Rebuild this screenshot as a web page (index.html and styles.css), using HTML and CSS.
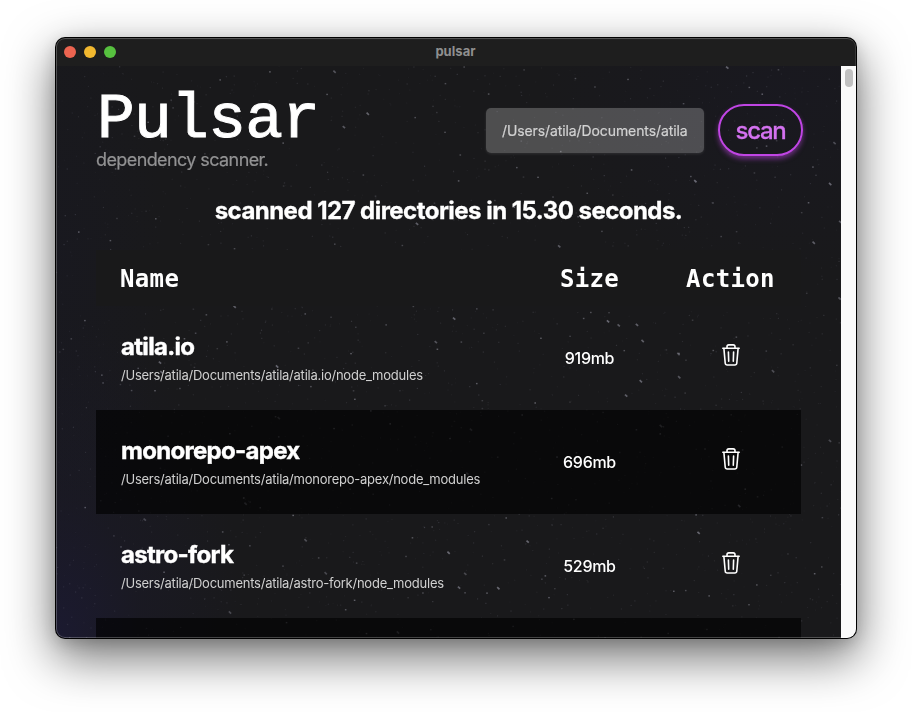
FILE: index.html
```html
<!DOCTYPE html>
<html lang="en">
<head>
<meta charset="utf-8">
<title>pulsar</title>
<link rel="stylesheet" href="styles.css">
</head>
<body>
<svg class="defs" aria-hidden="true">
  <symbol id="trash" viewBox="0 0 20 24">
    <g fill="none" stroke="currentColor" stroke-width="1.6" stroke-linecap="round" stroke-linejoin="round">
      <path d="M1.8 5.3H18.2"/>
      <path d="M6 5V3.7Q6 1.9 7.8 1.9H12.2Q14 1.9 14 3.7V5"/>
      <path d="M2.9 5.5L4.2 20Q4.4 22 6.2 22H13.8Q15.6 22 15.8 20L17.1 5.5"/>
      <path d="M7.4 9L7.7 18.2M12.6 9L12.3 18.2"/>
    </g>
  </symbol>
</svg>
<div class="window">
  <div class="titlebar">
    <div class="lights"><i class="light red"></i><i class="light yellow"></i><i class="light green"></i></div>
    <span class="title">pulsar</span>
  </div>
  <div class="viewport">
    <main class="content">
      <canvas class="stars" id="stars" width="785" height="572"></canvas>
      <header class="header">
        <div class="brand">
          <h1 class="logo">Pulsar</h1>
          <p class="tagline">dependency scanner.</p>
        </div>
        <div class="controls">
          <div class="path-field">/Users/atila/Documents/atila</div>
          <button class="scan">scan</button>
        </div>
      </header>
      <h2 class="summary">scanned 127 directories in 15.30 seconds.</h2>
      <section class="table">
        <div class="row head"><span class="name">Name</span><span>Size</span><span>Action</span></div>
        <div class="row">
          <div class="name"><h3 class="pkg">atila.io</h3><p class="dir">/Users/atila/Documents/atila/atila.io/node_modules</p></div>
          <span class="size">919mb</span>
          <svg class="trash"><use href="#trash"/></svg>
        </div>
        <div class="row dark">
          <div class="name"><h3 class="pkg">monorepo-apex</h3><p class="dir">/Users/atila/Documents/atila/monorepo-apex/node_modules</p></div>
          <span class="size">696mb</span>
          <svg class="trash"><use href="#trash"/></svg>
        </div>
        <div class="row">
          <div class="name"><h3 class="pkg">astro-fork</h3><p class="dir">/Users/atila/Documents/atila/astro-fork/node_modules</p></div>
          <span class="size">529mb</span>
          <svg class="trash"><use href="#trash"/></svg>
        </div>
        <div class="row dark"></div>
      </section>
    </main>
    <div class="scrollbar"><div class="thumb"></div></div>
  </div>
</div>
<script src="stars.js"></script>
</body>
</html>
```
FILE: styles.css
```css
* { box-sizing: border-box; margin: 0; padding: 0; }
body {
  height: 712px;
  padding: 38px 56px 0;
  overflow: hidden;
  background: #fff;
  color: #fff;
  font-family: Inter, "Liberation Sans", sans-serif;
}
.defs { position: absolute; width: 0; height: 0; }
.window {
  position: relative;
  width: 800px;
  height: 600px;
  border-radius: 9px;
  overflow: hidden;
  background: #19191b;
  box-shadow: 0 0 0 1px #000, 0 18px 48px 2px rgba(0,0,0,.55), 0 4px 16px rgba(0,0,0,.16);
}
.window::after {
  content: "";
  position: absolute;
  inset: 0;
  border: 1px solid rgba(255,255,255,.24);
  border-right-color: rgba(255,255,255,.12);
  border-radius: 9px;
  pointer-events: none;
}
.titlebar {
  display: grid;
  grid-template-columns: 1fr auto 1fr;
  align-items: center;
  height: 28px;
  padding: 0 8px;
  background: #1e1e1e;
}
.lights { display: flex; gap: 8px; }
.light { width: 12px; height: 12px; border-radius: 50%; }
.red { background: #ec6450; }
.yellow { background: #f2b82f; }
.green { background: #57c13f; }
.title { margin: -2px 1px 0 0; font-size: 13px; font-weight: 700; letter-spacing: .05px; color: #8f8f8f; }
.viewport { display: flex; height: 572px; }
.content {
  position: relative;
  width: 785px;
  height: 572px;
  padding: 22px 40px 0;
  overflow: hidden;
  background:
    radial-gradient(ellipse 190px 320px at 0 100%, rgba(28,26,56,.72), rgba(28,26,56,.25) 45%, transparent),
    radial-gradient(ellipse 110px 300px at 0 35%, rgba(24,24,40,.35), transparent),
    radial-gradient(ellipse 240px 180px at 92% 5%, rgba(25,24,40,.35), transparent),
    #19191b;
}
.stars { position: absolute; left: 0; top: 0; }
.header, .summary, .table { position: relative; }
.header { display: flex; justify-content: space-between; height: 93px; margin-right: -2px; }
.logo {
  height: 62px;
  padding: 4px 0 0 1px;
  font: 400 63px/58px "Liberation Mono", monospace;
  letter-spacing: -.75px;
  -webkit-text-stroke: 1px #fff;
}
.tagline { font-size: 18px; line-height: 20px; letter-spacing: -.6px; color: #929293; -webkit-text-stroke: .2px #929293; }
.controls { display: flex; gap: 14px; align-items: flex-start; padding-top: 16px; }
.path-field {
  width: 218px;
  height: 45px;
  margin-top: 4px;
  padding-left: 16px;
  border-radius: 5px;
  background: rgba(255,255,255,.23);
  box-shadow: 0 1px 3px rgba(255,255,255,.1);
  font-size: 14px;
  line-height: 46px;
  letter-spacing: -.1px;
  color: #d2d2d2;
  -webkit-text-stroke: .2px #d2d2d2;
  white-space: nowrap;
}
.scan {
  width: 85px;
  height: 52px;
  padding-top: 2px;
  border: 2px solid #c045e4;
  border-radius: 26px;
  background: transparent;
  box-shadow: 0 3px 5px rgba(192,69,228,.5);
  font: 500 24px/46px Inter, sans-serif;
  letter-spacing: -1.3px;
  color: #d472f0;
  -webkit-text-stroke: .3px #d472f0;
}
.summary {
  height: 69px;
  padding-top: 15px;
  font-size: 24px;
  line-height: 30px;
  font-weight: 700;
  letter-spacing: -.53px;
  -webkit-text-stroke: .3px #fff;
  text-align: center;
  white-space: nowrap;
}
.row {
  display: grid;
  grid-template-columns: 60% 20% 20%;
  align-items: center;
  justify-items: center;
  height: 104px;
}
.head {
  height: 56px;
  padding-top: 2px;
  background: #19191a;
  font: 700 24px/54px "DejaVu Sans Mono", monospace;
  letter-spacing: .35px;
}
.dark { background: rgba(0,0,0,.63); }
.name { justify-self: start; padding-left: 24px; }
div.name { padding-left: 25px; }
.pkg { font-size: 24px; line-height: 30px; font-weight: 700; letter-spacing: -.7px; -webkit-text-stroke: .4px #fff; }
.dir { margin: 5px 0 1px; font-size: 13px; line-height: 16px; color: #d0d0d0; letter-spacing: -.24px; white-space: nowrap; }
.size { font-size: 16px; font-weight: 500; letter-spacing: -.3px; }
.trash { width: 20px; height: 24px; margin-bottom: 6px; }
.scrollbar { width: 15px; padding: 3px 3px 0 4px; background: #fafafa; }
.thumb { width: 8px; height: 18px; border-radius: 4px; background: #c1c1c1; }
```
FILE: stars.js
```js
// Seeded star field so that the sky is the same on every load.
const ctx = document.getElementById('stars').getContext('2d');
let seed = 4711;
const rnd = () => (seed = (seed * 16807) % 2147483647) / 2147483647;
for (let i = 0; i < 2200; i++) {
  const x = rnd() * 785, y = rnd() * 572;
  ctx.fillStyle = `rgba(170,170,190,${0.04 + 0.2 * rnd() * rnd()})`;
  ctx.fillRect(x, y, 1.2, 1.2);
}
for (let i = 0; i < 260; i++) {
  const x = rnd() * 785, y = rnd() * 572;
  ctx.fillStyle = `rgba(185,185,200,${0.15 + 0.3 * rnd()})`;
  ctx.fillRect(x, y, 1.6, 1.4);
}
ctx.lineWidth = 1.7;
for (let i = 0; i < 55; i++) {
  const x = rnd() * 785, y = rnd() * 572;
  ctx.strokeStyle = `rgba(170,170,185,${0.3 + 0.25 * rnd()})`;
  ctx.beginPath();
  ctx.moveTo(x, y);
  ctx.lineTo(x + 2.3, y + 2.1);
  ctx.stroke();
}
```
